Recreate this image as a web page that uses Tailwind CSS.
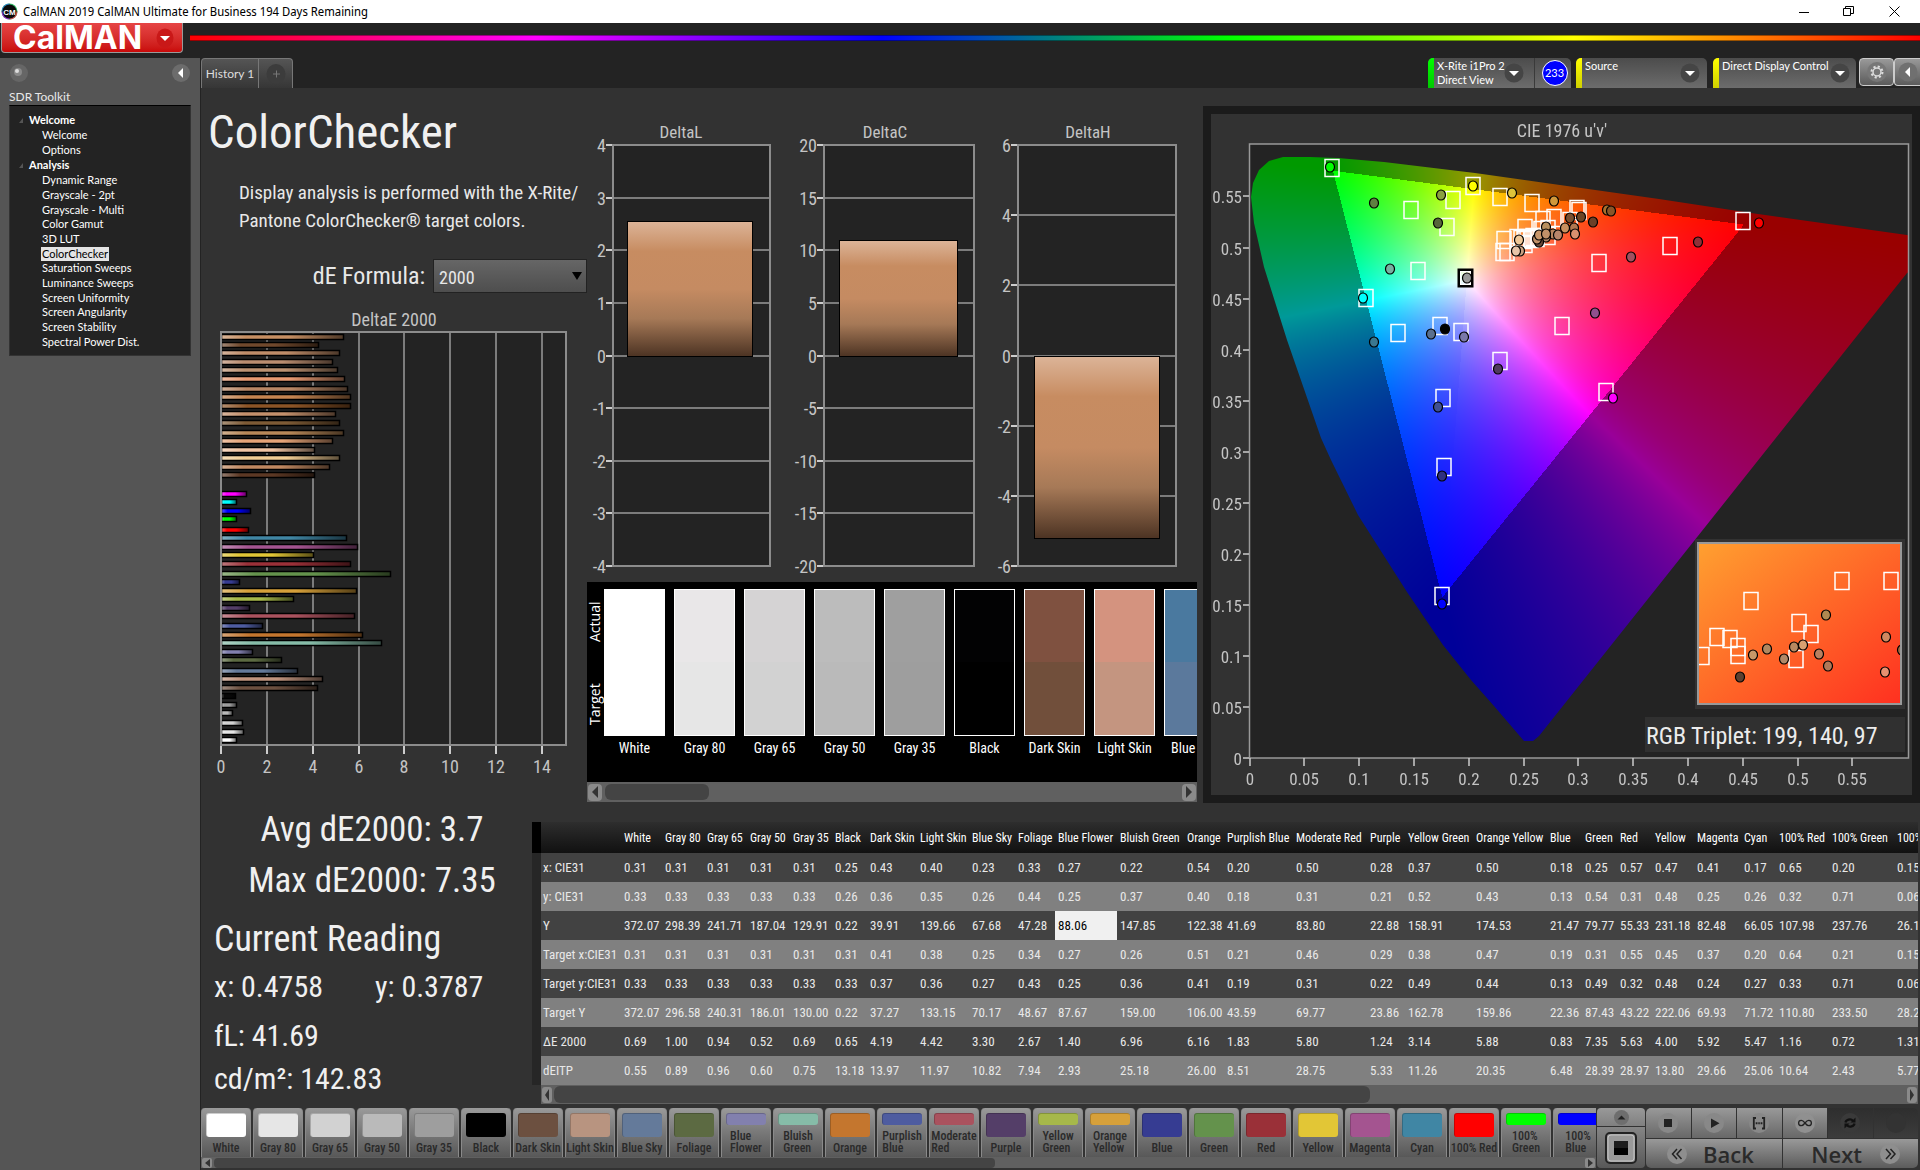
<!DOCTYPE html>
<html lang="en">
<head>
    <meta charset="UTF-8">
    <meta name="viewport" content="width=device-width, initial-scale=1.0">
    <title>CalMAN 2019 CalMAN Ultimate for Business</title>
    <script src="https://cdn.jsdelivr.net/npm/@tailwindcss/browser@4"></script>
</head>
<body class="min-h-screen flex flex-col bg-[#232323] font-['Roboto_Condensed',Roboto,sans-serif] text-[#e8e8e8] overflow-hidden">

    <!-- window title bar -->
    <div class="h-[23px] shrink-0 bg-white text-black flex items-center justify-between pl-px pr-[2px]">
        <div class="flex items-center gap-[5px] font-['Noto_Sans_Display','Noto_Sans',sans-serif] text-[12px]">
            <svg width="17" height="17" viewBox="0 0 17 17" aria-hidden="true">
                <circle cx="8.500" cy="8.500" r="8" fill="#3b6"/>
                <path d="M8.500 .5a8 8 0 0 0-8 8h8z" fill="#38c"/>
                <path d="M.5 8.500a8 8 0 0 0 8 8v-8z" fill="#93c"/>
                <path d="M8.500 16.500a8 8 0 0 0 8-8h-8z" fill="#c55"/>
                <circle cx="8.500" cy="8.500" r="7" fill="#0a0a0a"/>
                <text x="8.500" y="11.500" font-size="8" font-weight="700" text-anchor="middle" fill="#fff" font-family="Liberation Sans">CM</text>
            </svg>
            <span class="whitespace-nowrap">CalMAN 2019 CalMAN Ultimate for Business 194 Days Remaining</span>
        </div>
        <div class="flex items-center">
            <button aria-label="Minimize" class="w-[45px] h-[22px] flex items-center justify-center"><svg width="10" height="10"><path d="M0 5.500h10" stroke="#000"/></svg></button>
            <button aria-label="Restore" class="w-[45px] h-[22px] flex items-center justify-center"><svg width="11" height="11" fill="none" stroke="#000"><path d="M.5 2.500h7v7h-7zM2.500 2.500v-2h8v7h-3"/></svg></button>
            <button aria-label="Close" class="w-[47px] h-[22px] flex items-center justify-center"><svg width="11" height="11" stroke="#000"><path d="M.5.5l10 10M10.500.5l-10 10"/></svg></button>
        </div>
    </div>

    <!-- logo and rainbow line -->
    <header class="h-[35px] shrink-0 flex items-start pl-px">
        <button class="w-[182px] h-[30px] flex items-center justify-between pl-[11px] pr-2 rounded-b-[4px] border border-t-0 border-[#9a9a9a] bg-linear-to-b from-[#e64545] to-[#c90808]">
            <span class="font-['Inter',sans-serif] font-bold text-[32px] leading-[28px] text-white">CalMAN</span>
            <svg width="18" height="20" viewBox="0 0 18 20" aria-hidden="true"><ellipse cx="9" cy="10" rx="8.500" ry="9.500" fill="#c91818"/><path d="M4 8h10l-5 5z" fill="#fff"/></svg>
        </button>
        <div class="flex-1 ml-[7px] mt-[12px] h-[6px] border-y border-black/40 bg-[linear-gradient(90deg,#f00,#f0f_20%,#00f_40%,#0f0_60%,#ff0_80%,#f00)]"></div>
    </header>

    <div class="flex-1 flex min-h-0">
        <!-- workflow tree -->
        <aside class="w-[200px] shrink-0 bg-[#555] px-[9px] font-['Lato',sans-serif] text-[11px]">
            <div class="h-[30px] flex items-center justify-between">
                <svg width="20" height="20" aria-hidden="true"><circle cx="10" cy="10" r="9" fill="#666"/><circle cx="9" cy="9" r="4" fill="#8a8a8a"/><circle cx="8" cy="8" r="2" fill="#ddd"/></svg>
                <button aria-label="Collapse"><svg width="20" height="20"><circle cx="10" cy="10" r="9" fill="#6c6c6c"/><path d="M12 5v10l-5-5z" fill="#fff"/></svg></button>
            </div>
            <div class="h-[17px] text-[12px] leading-[17px]">SDR Toolkit</div>
            <nav class="h-[251px] border border-[#333] border-t-black bg-[#232323] pt-[6px] text-white">
                <div class="h-[16px] leading-[14px] font-bold flex items-center gap-[6px] pl-[9px]"><svg width="4" height="5"><path d="M4 0v5H0z" fill="#555"/></svg>Welcome</div>
                <ul id="tree-welcome" class="h-[29px] flex flex-col pl-[31px]"></ul>
                <div class="h-[16px] leading-[14px] font-bold flex items-center gap-[6px] pl-[9px]"><svg width="4" height="5"><path d="M4 0v5H0z" fill="#555"/></svg>Analysis</div>
                <ul id="tree-analysis" class="h-[176px] flex flex-col pl-[31px]"></ul>
            </nav>
        </aside>

        <main class="flex-1 min-w-0 flex flex-col pl-px">
            <!-- tabs and device selectors -->
            <div class="h-[30px] shrink-0 flex items-stretch justify-between font-['Lato',sans-serif] text-[12px] text-white">
                <div class="flex">
                    <button class="w-[58px] rounded-tl-[4px] border border-b-0 border-[#777] bg-linear-to-b from-[#555] to-[#363636] text-[#ddd] whitespace-nowrap">History 1</button>
                    <button aria-label="Add" class="w-[34px] rounded-tr-[4px] border border-l-0 border-b-0 border-[#777] bg-linear-to-b from-[#555] to-[#363636] flex items-center justify-center"><svg width="20" height="22"><ellipse cx="10" cy="11" rx="9.500" ry="10" fill="#3c3c3c"/><path d="M7 11h7M10.500 7.500v7" stroke="#777"/></svg></button>
                </div>
                <div class="flex items-stretch text-[11px]">
                    <div class="w-[143px] flex rounded-t-[5px] overflow-hidden bg-linear-to-b from-[#4c4c4c] to-[#6c6c6c] mr-[5px]">
                        <div class="w-[6px] shrink-0 bg-linear-to-b from-[#00ff00] to-[#00c800]"></div>
                        <div class="flex-1 min-w-0 pl-[3px] pt-px leading-[14px] whitespace-nowrap">X-Rite i1Pro 2<br>Direct View</div>
                        <button aria-label="Meter menu" class="w-[31px] flex items-center border-r border-[#3a3a3a]"><svg width="20" height="20"><circle cx="10" cy="10" r="9.500" fill="#454545"/><path d="M5 8h10l-5 5z" fill="#fff"/></svg></button>
                        <div class="w-[36px] flex items-center justify-center pl-[3px]"><span class="w-[26px] h-[26px] rounded-full border border-white bg-[#0000ff] leading-[24px] text-center">233</span></div>
                    </div>
                    <div class="w-[131px] flex rounded-t-[5px] overflow-hidden bg-linear-to-b from-[#4c4c4c] to-[#6c6c6c] mr-[6px]">
                        <div class="w-[6px] shrink-0 bg-linear-to-b from-[#ffff00] to-[#d0d000]"></div>
                        <div class="flex-1 min-w-0 pl-[3px] pt-px leading-[14px]">Source</div>
                        <button aria-label="Source menu" class="w-[27px] flex items-center"><svg width="20" height="20"><circle cx="10" cy="10" r="9.500" fill="#454545"/><path d="M5 8h10l-5 5z" fill="#fff"/></svg></button>
                    </div>
                    <div class="w-[143px] flex rounded-t-[5px] overflow-hidden bg-linear-to-b from-[#4c4c4c] to-[#6c6c6c] mr-[3px]">
                        <div class="w-[6px] shrink-0 bg-linear-to-b from-[#ffff00] to-[#d0d000]"></div>
                        <div class="flex-1 min-w-0 pl-[3px] pt-px leading-[14px] whitespace-nowrap">Direct Display Control</div>
                        <button aria-label="Display menu" class="w-[26px] flex items-center"><svg width="20" height="20"><circle cx="10" cy="10" r="9.500" fill="#454545"/><path d="M5 8h10l-5 5z" fill="#fff"/></svg></button>
                    </div>
                    <button aria-label="Settings" class="w-[35px] h-[28px] rounded-[4px] border border-[#ccc] bg-linear-to-b from-[#999] to-[#5c5c5c] flex items-center justify-center">
                        <svg width="22" height="22" viewBox="0 0 22 22" fill="none"><circle cx="11" cy="11" r="10" fill="#777"/><circle cx="11" cy="11" r="4" stroke="#ddd" stroke-width="1.500"/><circle cx="11" cy="11" r="5.500" stroke="#ddd" stroke-width="2" stroke-dasharray="2.160 2.160"/></svg>
                    </button>
                    <button aria-label="Hide" class="w-[26px] h-[28px] rounded-l-[4px] border border-r-0 border-[#ccc] bg-linear-to-b from-[#999] to-[#5c5c5c] flex items-center justify-center"><svg width="20" height="20"><circle cx="10" cy="10" r="9.500" fill="#707070"/><path d="M12 5v10l-5-5z" fill="#fff"/></svg></button>
                </div>
            </div>

            <div class="flex-1 min-h-0 bg-[#323232]">
                <div class="flex">
                    <!-- left column -->
                    <section class="w-[386px] shrink-0">
                        <h1 class="pl-[7px] pt-[17px] text-[47px] leading-[54px] text-[#f0f0f0]">ColorChecker</h1>
                        <p class="mt-[20px] pl-[38px] text-[19px] leading-[28px] whitespace-nowrap">Display analysis is performed with the X-Rite/<br>Pantone ColorChecker® target colors.</p>
                        <div class="mt-[24px] flex items-center justify-end gap-[8px]">
                            <label for="formula" class="text-[24px] leading-[32px]">dE Formula:</label>
                            <div class="relative">
                                <select id="formula" class="block appearance-none w-[154px] h-[34px] pl-[5px] pt-[3px] text-[18px] border border-[#222] bg-linear-to-b from-[#666] to-[#4e4e4e] text-[#e8e8e8]"><option>2000</option></select>
                                <svg class="absolute right-[5px] top-[13px] pointer-events-none" width="10" height="8"><path d="M0 0h10L5 8z" fill="#000"/></svg>
                            </div>
                        </div>
                        <svg id="delta-e" class="w-full mt-[7px] block" viewBox="0 0 386 490"></svg>
                    </section>

                    <!-- middle column -->
                    <section class="w-[610px] shrink-0 pt-[22px]">
                        <svg id="delta-lch" class="w-full block" viewBox="0 0 610 472"></svg>
                        <div class="bg-black h-[200px] flex overflow-hidden">
                            <div class="w-[17px] shrink-0 flex flex-col font-['Open_Sans',sans-serif] text-[14px] leading-[16px] text-white">
                                <span class="[writing-mode:vertical-rl] rotate-180 h-[80px] text-center">Actual</span>
                                <span class="[writing-mode:vertical-rl] rotate-180 h-[84px] text-center">Target</span>
                            </div>
                            <div id="compare" class="flex gap-[9px] pt-[7px]"></div>
                        </div>
                        <div class="h-[20px] bg-[#606060] flex items-center gap-[3px] px-px">
                            <button aria-label="Scroll left" class="w-[14px] h-[17px] rounded-[4px] bg-[#8a8a8a] flex items-center justify-center"><svg width="6" height="12"><path d="M6 0v12L0 6z" fill="#333"/></svg></button>
                            <div class="w-[104px] h-[16px] rounded-[6px] bg-[#444]"></div>
                            <button aria-label="Scroll right" class="w-[14px] h-[17px] ml-auto rounded-[4px] bg-[#8a8a8a] flex items-center justify-center"><svg width="6" height="12"><path d="M0 0v12l6-6z" fill="#333"/></svg></button>
                        </div>
                    </section>

                    <!-- chromaticity diagram -->
                    <section class="flex-1 min-w-0 pt-[18px] pl-[6px]">
                        <div class="bg-[#1b1b1b] p-[8px]">
                            <div class="relative bg-[#323232] aspect-[701/681]">
                                <canvas id="locus" width="701" height="681" class="absolute inset-0 w-full h-full"></canvas>
                                <svg id="cie" class="absolute inset-0 w-full h-full" viewBox="0 0 701 681"></svg>
                            </div>
                        </div>
                    </section>
                </div>

                <div class="flex">
                    <!-- readouts -->
                    <section class="w-[331px] shrink-0 pt-px text-[#f0f0f0] whitespace-nowrap">
                        <div class="text-[35px] leading-[51px] text-center pl-[11px]">Avg dE2000: 3.7</div>
                        <div class="text-[35px] leading-[51px] text-center pl-[11px]">Max dE2000: 7.35</div>
                        <div class="mt-[8px] pl-[13px] text-[36px] leading-[50px]">Current Reading</div>
                        <div class="pl-[13px] text-[30px] leading-[46px] grid grid-cols-[161px_1fr]"><span>x: 0.4758</span><span>y: 0.3787</span></div>
                        <div class="pl-[13px] text-[30px] leading-[52px]">fL: 41.69</div>
                        <div class="pl-[13px] text-[30px] leading-[34px]">cd/m²: 142.83</div>
                    </section>

                    <!-- results -->
                    <section class="flex-1 min-w-0 mt-[19px] mr-[2px] pl-[9px] bg-[linear-gradient(180deg,#000_31px,#262626_31px,#262626_263px,#323232_263px)] overflow-hidden">
                        <div class="overflow-hidden">
                            <table class="table-fixed w-[1436px] text-[13px] whitespace-nowrap text-left">
                                <colgroup id="cols"></colgroup>
                                <thead class="bg-linear-to-b from-[#2e2e2e] to-[#111]"><tr id="head" class="h-[31px]"></tr></thead>
                                <tbody id="rows"></tbody>
                            </table>
                        </div>
                        <div class="h-[19px] bg-[#606060] flex items-center gap-[2px] px-px">
                            <button aria-label="Scroll left" class="w-[10px] h-[16px] rounded-[3px] bg-[#8a8a8a] flex items-center justify-center"><svg width="4" height="12"><path d="M4 0v12L0 6z" fill="#333"/></svg></button>
                            <div class="w-[816px] h-[17px] rounded-[6px] bg-[#444]"></div>
                            <button aria-label="Scroll right" class="w-[10px] h-[16px] ml-auto rounded-[3px] bg-[#8a8a8a] flex items-center justify-center"><svg width="4" height="12"><path d="M0 0v12l4-6z" fill="#333"/></svg></button>
                        </div>
                    </section>
                </div>
            </div>

            <!-- patch strip and transport -->
            <footer class="h-[63px] shrink-0 bg-[#323232] flex pt-px pb-[2px] text-[#2a2a2a]">
                <div class="flex-1 min-w-0 flex flex-col">
                    <div id="patches" class="flex gap-[2px] overflow-hidden h-[49px]"></div>
                    <div class="h-[11px] bg-[#606060] flex items-center gap-[2px] px-px">
                        <button aria-label="Scroll left" class="w-[10px] h-[10px] rounded-[2px] bg-[#8a8a8a] flex items-center justify-center"><svg width="5" height="8"><path d="M5 0v8L0 4z" fill="#333"/></svg></button>
                        <div class="w-[781px] h-[10px] rounded-[4px] bg-[#444]"></div>
                        <button aria-label="Scroll right" class="w-[10px] h-[10px] ml-auto rounded-[2px] bg-[#8a8a8a] flex items-center justify-center"><svg width="5" height="8"><path d="M0 0v8l5-4z" fill="#333"/></svg></button>
                    </div>
                </div>
                <div class="w-[48px] ml-px mr-px flex flex-col gap-px shrink-0">
                    <button aria-label="Expand" class="h-[18px] rounded-t-[4px] bg-linear-to-b from-[#999] to-[#808080] flex items-center justify-center"><svg width="15" height="15"><circle cx="7.500" cy="7.500" r="7.500" fill="#6e6e6e"/><path d="M3.500 9.500l4-4 4 4z" fill="#222"/></svg></button>
                    <button aria-label="Pattern" class="flex-1 rounded-b-[4px] bg-linear-to-b from-[#858585] to-[#585858] flex items-center justify-center"><svg width="32" height="32"><rect x="1" y="1" width="30" height="30" rx="4" fill="#999" stroke="#222" stroke-width="2"/><rect x="3" y="3" width="26" height="26" rx="3" fill="none" stroke="#c4c4c4"/><path d="M9 9h14v7H9z" fill="#1c1c1c"/><path d="M9 16h14v7H9z" fill="#000"/></svg></button>
                </div>
                <div class="w-[274px] shrink-0 grid grid-cols-6 grid-rows-[30px_29px] gap-px pr-[2px] font-['Open_Sans',sans-serif]">
                    <button aria-label="Stop" class="rounded-tl-[5px] bg-linear-to-b from-[#999] to-[#686868] flex items-center justify-center"><svg width="20" height="20"><circle cx="10" cy="10" r="10" fill="#888"/><path d="M6 6h8v8H6z" fill="#222"/></svg></button>
                    <button aria-label="Play" class="bg-linear-to-b from-[#999] to-[#686868] flex items-center justify-center"><svg width="20" height="20"><circle cx="10" cy="10" r="10" fill="#888"/><path d="M7 5.500v9.500l8.500-4.700z" fill="#222"/></svg></button>
                    <button aria-label="Read series" class="bg-linear-to-b from-[#999] to-[#686868] flex items-center justify-center"><svg width="20" height="20"><circle cx="10" cy="10" r="10" fill="#888"/><path d="M7 5H4.800v10.500H7M13 5h2.200v10.500H13" fill="none" stroke="#222" stroke-width="1.800"/><path d="M6.700 10.300h1.800m.8 0h1.500m.8 0h1.800" stroke="#222" stroke-width="2"/></svg></button>
                    <button aria-label="Read continuous" class="bg-linear-to-b from-[#999] to-[#686868] flex items-center justify-center"><svg width="20" height="20"><circle cx="10" cy="10" r="10" fill="#909090"/><path d="M10 10c-1.500-2-2.500-2.700-3.700-2.700a2.700 2.700 0 0 0 0 5.400c1.200 0 2.200-.7 3.700-2.700s2.500-2.700 3.700-2.700a2.700 2.700 0 0 1 0 5.400c-1.200 0-2.200-.7-3.700-2.700z" fill="none" stroke="#222" stroke-width="1.300"/></svg></button>
                    <button aria-label="Refresh" class="bg-linear-to-b from-[#2e2e2e] to-[#3c3c3c] flex items-center justify-center"><svg width="20" height="20"><circle cx="10" cy="10" r="10" fill="#3a3a3a"/><path d="M5.500 9.500c.3-2.500 5-4.500 7.500-1.800M14.500 10.500c-.3 2.500-5 4.500-7.500 1.800" fill="none" stroke="#111" stroke-width="2.200"/><path d="M15.500 4.500v5h-5zM4.500 15.500v-5h5z" fill="#111"/></svg></button>
                    <button aria-label="Unused" class="rounded-tr-[5px] bg-linear-to-b from-[#2e2e2e] to-[#3c3c3c] flex items-center justify-center"><svg width="20" height="20"><circle cx="10" cy="10" r="10" fill="#333"/></svg></button>
                    <button class="col-span-3 rounded-bl-[5px] bg-linear-to-b from-[#999] to-[#5c5c5c] flex items-center pl-[21px] gap-[16px] text-[22px] leading-[28px] font-semibold"><svg width="20" height="20"><circle cx="10" cy="10" r="10" fill="#8e8e8e"/><path d="M10 5l-4.500 5 4.500 5M14.500 5L10 10l4.500 5" fill="none" stroke="#222" stroke-width="1.500"/></svg>Back</button>
                    <button class="col-span-3 rounded-br-[5px] bg-linear-to-b from-[#999] to-[#5c5c5c] flex items-center justify-end pr-[18px] gap-[18px] text-[22px] leading-[28px] font-semibold">Next<svg width="20" height="20"><circle cx="10" cy="10" r="10" fill="#8e8e8e"/><path d="M6 5l4.500 5L6 15M10.500 5l4.500 5-4.500 5" fill="none" stroke="#222" stroke-width="1.500"/></svg></button>
                </div>
            </footer>
        </main>
    </div>

    <script>
        const $ = id => document.getElementById(id);

        // workflow tree
        const tree = {
            'tree-welcome': ['Welcome', 'Options'],
            'tree-analysis': ['Dynamic Range', 'Grayscale - 2pt', 'Grayscale - Multi', 'Color Gamut', '3D LUT', 'ColorChecker', 'Saturation Sweeps', 'Luminance Sweeps', 'Screen Uniformity', 'Screen Angularity', 'Screen Stability', 'Spectral Power Dist.']
        };
        for (const id in tree) {
            $(id).innerHTML = tree[id].map(t => `<li class="flex-1 min-h-0 flex items-center"><a href="#" class="leading-[14px] px-px ${t === 'ColorChecker' ? 'bg-[#e4e4e4] text-black' : ''}">${t}</a></li>`).join('');
        }

        // DeltaE 2000 bars: [y, value, color]
        const bars = [
            [110, 5.32, '#c68f63'], [135, 4.23, '#70482c'], [160, 5.15, '#bf8c68'], [185, 4.84, '#ba8d70'], [211, 5.06, '#bc9272'], [237, 5.36, '#e89a72'],
            [267, 5.49, '#b98765'], [292, 5.63, '#c58450'], [317, 5.63, '#8c5426'], [343, 4.97, '#c4906c'], [369, 5.15, '#7d5a35'], [399, 5.32, '#b88858'],
            [424, 4.84, '#e6a478'], [450, 4.06, '#f0c4a4'], [475, 5.15, '#f0cc94'], [501, 4.71, '#c08860'], [526, 4.06, '#5c3824'],
            [583, 1.09, '#ff00ff'], [607, 0.65, '#00ffff'], [634, 1.28, '#0000ff'], [658, 0.65, '#00ff00'], [690, 1.16, '#ff0000'],
            [715, 5.47, '#4086a4'], [741, 5.92, '#a45490'], [766, 4.00, '#e2c636'], [792, 5.63, '#9a3038'], [822, 7.35, '#64924c'], [847, 0.80, '#363c92'],
            [873, 5.88, '#d6a03a'], [898, 3.14, '#a6b84a'], [924, 1.24, '#543e68'], [949, 5.80, '#aa525e'], [979, 1.80, '#4e5ca0'], [1006, 6.16, '#c4762e'],
            [1030, 6.96, '#86bca8'], [1057, 1.35, '#8280ae'], [1081, 2.62, '#5c6a42'], [1112, 3.30, '#647a9a'], [1138, 4.42, '#c0947e'], [1163, 4.19, '#6c5040'],
            [1189, 0.62, '#080808'], [1215, 0.65, '#9e9e9e'], [1240, 0.50, '#b8b8b8'], [1270, 0.92, '#d2d2d2'], [1296, 0.98, '#e6e6e6'], [1321, 0.65, '#ffffff']
        ];
        let e = `<defs>
            <linearGradient id="shade-x"><stop offset="0" stop-color="#fff" stop-opacity=".35"/><stop offset=".2" stop-color="#fff" stop-opacity="0"/><stop offset=".55" stop-color="#000" stop-opacity="0"/><stop offset="1" stop-color="#000" stop-opacity=".6"/></linearGradient></defs>
            <rect x="20" y="32" width="345" height="413" fill="#232323"/>`;
        for (let v = 0; v <= 14; v += 2) {
            const x = Math.round(20 + v * 22.93);
            if (v) e += `<path d="M${x} 33V446" stroke="#7c7c7c" stroke-width="2"/>`;
            e += `<path d="M${x} 446v8" stroke="#ccc" stroke-width="2"/><text x="${x}" y="473" font-size="18" fill="#c4c4c4" text-anchor="middle">${v}</text>`;
        }
        bars.forEach(([y, v, c]) => {
            const box = `x="20.5" y="${Math.round(y / 3) - 2.5}" width="${Math.round(v * 22.93)}" height="5"`;
            e += `<rect ${box} fill="${c}"/><rect ${box} fill="url(#shade-x)" stroke="#000" stroke-width="1.5"/>`;
        });
        e += `<rect x="20" y="32" width="345" height="413" fill="none" stroke="#8c8c8c" stroke-width="2"/>
            <text x="193" y="26" font-size="18" fill="#c4c4c4" text-anchor="middle">DeltaE 2000</text>`;
        $('delta-e').innerHTML = e;

        // DeltaL, DeltaC, DeltaH
        const deltas = [
            { name: 'DeltaL', mid: 94, x: 26, w: 157, max: 4, step: 1, value: 2.58, bx: 40, bw: 125 },
            { name: 'DeltaC', mid: 298, x: 237, w: 150, max: 20, step: 5, value: 11, bx: 252, bw: 118 },
            { name: 'DeltaH', mid: 501, x: 431, w: 158, max: 6, step: 2, value: -5.2, bx: 447, bw: 125 }
        ];
        let d = `<defs><linearGradient id="skin" x2="0" y2="1"><stop offset="0" stop-color="#dcb498"/><stop offset=".22" stop-color="#c78c61"/><stop offset=".5" stop-color="#c58b62"/><stop offset=".72" stop-color="#a67957"/><stop offset="1" stop-color="#4c3323"/></linearGradient></defs>`;
        deltas.forEach(c => {
            d += `<rect x="${c.x}" y="35" width="${c.w}" height="421" fill="#232323"/><text x="${c.mid}" y="28" font-size="17" fill="#c4c4c4" text-anchor="middle">${c.name}</text>`;
            for (let v = -c.max; v <= c.max; v += c.step) {
                const y = Math.round(245.6 - v / c.max * 210.4);
                d += `<path d="M${c.x} ${y}h${c.w}" stroke="#7c7c7c" stroke-width="2"/><path d="M${c.x - 7} ${y}h7" stroke="#ccc" stroke-width="2"/>
                    <text x="${c.x - 7}" y="${y + 7}" font-size="18" fill="#c4c4c4" text-anchor="end">${v}</text>`;
            }
            const h = Math.round(Math.abs(c.value) / c.max * 210);
            d += `<rect x="${c.x}" y="35" width="${c.w}" height="421" fill="none" stroke="#8c8c8c" stroke-width="2"/>
                <rect x="${c.bx + 0.5}" y="${c.value > 0 ? 246.5 - h : 246.5}" width="${c.bw}" height="${h}" fill="url(#skin)" stroke="#000"/>`;
        });
        $('delta-lch').innerHTML = d;

        // actual / target comparison
        const compare = [['White', '#ffffff', '#ffffff'], ['Gray 80', '#e9e7e8', '#e6e6e6'], ['Gray 65', '#d5d3d4', '#d2d2d2'], ['Gray 50', '#bcbcbc', '#bababa'], ['Gray 35', '#9f9f9f', '#9e9e9e'],
            ['Black', '#020203', '#000000'], ['Dark Skin', '#7f5140', '#714f3b'], ['Light Skin', '#d4937f', '#c49580'], ['Blue Sky', '#4a799f', '#5b799c']];
        $('compare').innerHTML = compare.map(([n, a, t]) => `<div class="w-[61px] shrink-0 text-center text-[14px] leading-[25px] text-white whitespace-nowrap">
            <div class="h-[147px] border border-white" style="background:linear-gradient(${a} 50%,${t} 50%)"></div>${n}</div>`).join('');

        // chromaticity diagram
        const OX = 1211, OY = 114;
        const px = u => 1249.5 - OX + u * 1096, py = v => 758 - OY - v * 1021;
        const uv2xyz = (u, v) => { const s = 6 * u - 16 * v + 12; const x = 9 * u / s, y = 4 * v / s; return [x, y, 1 - x - y]; };
        const inv = m => {
            const [a, b, c, d, e, f, g, h, i] = m, D = a * (e * i - f * h) - b * (d * i - f * g) + c * (d * h - e * g);
            return [e * i - f * h, c * h - b * i, b * f - c * e, f * g - d * i, a * i - c * g, c * d - a * f, d * h - e * g, b * g - a * h, a * e - b * d].map(n => n / D);
        };
        const mul = (m, v) => [0, 3, 6].map(r => m[r] * v[0] + m[r + 1] * v[1] + m[r + 2] * v[2]);
        const P = [0.64, 0.21, 0.15, 0.33, 0.71, 0.06, 0.03, 0.08, 0.79];
        const S = mul(inv(P), [0.3127 / 0.329, 1, 0.3583 / 0.329]);
        const M = inv(P.map((n, k) => n * S[k % 3]));
        const cv = document.createElement('canvas');
        cv.width = 701; cv.height = 681;
        const cx = cv.getContext('2d'), img = cx.createImageData(701, 681);
        for (let y = 0; y < 681; y++) for (let x = 0; x < 701; x++) {
            const u = (x - px(0)) / 1096, v = Math.max(0.001, (py(0) - y) / 1021);
            const raw = mul(M, uv2xyz(u, v)), inside = Math.min(...raw) >= 0;
            const rgb = raw.map(n => Math.max(0, n));
            // weaken blue along the purple side
            if (rgb[1] <= rgb[0] && rgb[1] <= rgb[2]) rgb[2] -= 0.24 * (rgb[2] - rgb[1]) * Math.min(1, rgb[0] / rgb[2]);
            const top = Math.max(...rgb), k = (y * 701 + x) * 4;
            rgb.forEach((n, j) => img.data[k + j] = 255 * (inside ? 1 : 0.6) * n / top);
            img.data[k + 3] = 255;
        }
        cx.putImageData(img, 0, 0);
        const g = $('locus').getContext('2d');
        g.fillStyle = '#232323';
        g.fillRect(38, 30, 660, 614);
        g.beginPath(); g.rect(39, 30, 658, 614); g.clip();
        g.translate(-OX, -OY);
        const edge = [[1251, 197], [1253, 183], [1259, 170], [1269, 161], [1283, 157], [1310, 157], [1338, 158], [1384, 162], [1475, 173], [1567, 186], [1659, 199], [1751, 213], [1907, 235], [1960, 243], [1907, 273], [1539, 736], [1533, 741], [1524, 741], [1518, 734], [1494, 706], [1471, 680], [1443, 645], [1407, 592], [1358, 515], [1331, 460], [1321, 438], [1287, 340], [1264, 267], [1254, 223]];
        g.beginPath();
        edge.forEach((p, i) => i ? g.lineTo(...p) : g.moveTo(...p));
        g.closePath(); g.clip();
        g.drawImage(cv, OX, OY);

        let c = `<defs>
            <linearGradient id="in-a" x2="1" y2="1"><stop offset="0" stop-color="#ffa030"/><stop offset=".5" stop-color="#ff6828"/><stop offset="1" stop-color="#ff3020"/></linearGradient>
            <clipPath id="in-clip"><rect x="487" y="429" width="203" height="161"/></clipPath></defs>
            <rect x="38.500" y="30" width="659" height="614" fill="none" stroke="#999" stroke-width="1.500"/>
            <text x="351" y="23" font-size="18" fill="#c4c4c4" text-anchor="middle">CIE 1976 u'v'</text>`;
        for (let i = 0; i <= 11; i++) {
            const t = String(i * 5 / 100), x = Math.round(px(i * 0.05)), y = Math.round(py(i * 0.05));
            c += `<path d="M${x} 644v8M32 ${y}h6" stroke="#ccc" stroke-width="1.500"/>
                <text x="${x}" y="671" font-size="17" fill="#c4c4c4" text-anchor="middle">${t}</text>
                <text x="31" y="${y + 7}" font-size="17" fill="#c4c4c4" text-anchor="end">${t}</text>`;
        }
        const box = (x, y, s = '#fff') => `<rect x="${Math.round(x - OX) - 7}" y="${Math.round(y - OY) - 8.5}" width="14" height="17" fill="none" stroke="${s}" stroke-width="1.5"/>`;
        const dot = (x, y, f) => `<ellipse cx="${Math.round(x - OX)}" cy="${Math.round(y - OY)}" rx="4.5" ry="5" fill="${f}" stroke="#000" stroke-width="1.2"/>`;
        const targets = [[1332, 168], [1473, 186], [1453, 200], [1411, 210], [1447, 227], [1500, 197], [1532, 203], [1577, 209], [1579, 211], [1570, 221], [1554, 218], [1543, 220], [1525, 228], [1743, 221], [1670, 246], [1599, 263], [1418, 271], [1366, 298], [1440, 326], [1461, 332], [1398, 333], [1562, 326], [1500, 361], [1606, 392], [1443, 398], [1444, 467], [1442, 596],
            [1504, 240], [1503, 252], [1507, 252], [1517, 238], [1521, 239], [1524, 240], [1527, 238], [1531, 239], [1533, 237], [1537, 238], [1541, 230], [1548, 229], [1548, 236], [1525, 244]];
        targets.forEach(p => c += box(...p));
        c += `<rect x="248" y="156" width="13" height="16" fill="none" stroke="#000" stroke-width="3"/><rect x="249.500" y="157.500" width="10" height="13" fill="none" stroke="#fff"/>`;
        const measured = [[1330, 167, '#00ff00'], [1441, 195, '#8aa040'], [1374, 203, '#5f8040'], [1438, 223, '#56663a'], [1390, 269, '#78b0a0'], [1363, 298, '#00ffff'], [1374, 342, '#3a7890'], [1431, 334, '#5a7090'], [1445, 329, '#000'], [1464, 337, '#7a78a8'], [1498, 369, '#503a60'], [1595, 313, '#90508f'], [1613, 398, '#ff00ff'], [1438, 407, '#405090'], [1698, 242, '#903038'], [1759, 223, '#ff0000'], [1467, 278, '#999'], [1442, 476, '#303080'], [1442, 604, '#0000ff'],
            [1473, 186, '#ffff00'], [1512, 193, '#e0c43a'], [1554, 201, '#d0983a'], [1607, 210, '#a8702c'], [1611, 211, '#8a5528'], [1581, 217, '#6b4526'], [1570, 218, '#7a5030'], [1593, 222, '#6b4028'], [1574, 228, '#b07850'], [1565, 228, '#c8905f'], [1575, 234, '#d89070'], [1546, 227, '#b8905f'], [1553, 234, '#b8855f'], [1558, 235, '#b8856a'], [1546, 237, '#b08868'], [1539, 242, '#6b4a38'], [1537, 239, '#c09068'], [1539, 235, '#c8966a'], [1546, 234, '#c09068'], [1519, 240, '#f0c898'], [1520, 251, '#c8a080'], [1516, 251, '#e8c4a8'], [1631, 257, '#a05060']];
        measured.forEach(p => c += dot(...p));

        // magnifier around the selected point
        c += `<rect x="484" y="425" width="210" height="170" fill="#323232"/><rect x="487" y="429" width="203" height="161" fill="url(#in-a)"/><g clip-path="url(#in-clip)">`;
        [[1842, 581], [1891, 581], [1751, 601], [1799, 623], [1811, 634], [1717, 637], [1730, 639], [1738, 647], [1738, 655], [1796, 659], [1702, 656], [1691, 641]].forEach(p => c += box(...p));
        [[1826, 615, '#b08850'], [1886, 637, '#d08860'], [1902, 650, '#a06840'], [1767, 649, '#b08860'], [1753, 655, '#c89868'], [1794, 647, '#b88860'], [1803, 645, '#d8a070'], [1784, 659, '#b08868'], [1819, 654, '#b88060'], [1828, 666, '#b07858'], [1885, 672, '#e89070'], [1740, 677, '#5a4030']].forEach(p => c += dot(...p));
        c += `</g><rect x="487" y="429" width="203" height="161" fill="none" stroke="#999" stroke-width="2"/>
            <rect x="434" y="603" width="260" height="35" fill="#303030"/><text x="435" y="630" font-size="24" fill="#ececec">RGB Triplet: 199, 140, 97</text>`;
        $('cie').innerHTML = c;

        // results table
        const widths = [80, 41, 42, 43, 43, 42, 35, 50, 52, 46, 40, 62, 67, 40, 69, 74, 38, 68, 74, 35, 35, 35, 42, 47, 35, 53, 65, 83];
        const names = ['', 'White', 'Gray 80', 'Gray 65', 'Gray 50', 'Gray 35', 'Black', 'Dark Skin', 'Light Skin', 'Blue Sky', 'Foliage', 'Blue Flower', 'Bluish Green', 'Orange', 'Purplish Blue', 'Moderate Red', 'Purple', 'Yellow Green', 'Orange Yellow', 'Blue', 'Green', 'Red', 'Yellow', 'Magenta', 'Cyan', '100% Red', '100% Green', '100% Blue'];
        const rows = [
            'x: CIE31|0.31 0.31 0.31 0.31 0.31 0.25 0.43 0.40 0.23 0.33 0.27 0.22 0.54 0.20 0.50 0.28 0.37 0.50 0.18 0.25 0.57 0.47 0.41 0.17 0.65 0.20 0.15',
            'y: CIE31|0.33 0.33 0.33 0.33 0.33 0.26 0.36 0.35 0.26 0.44 0.25 0.37 0.40 0.18 0.31 0.21 0.52 0.43 0.13 0.54 0.31 0.48 0.25 0.26 0.32 0.71 0.06',
            'Y|372.07 298.39 241.71 187.04 129.91 0.22 39.91 139.66 67.68 47.28 88.06 147.85 122.38 41.69 83.80 22.88 158.91 174.53 21.47 79.77 55.33 231.18 82.48 66.05 107.98 237.76 26.1',
            'Target x:CIE31|0.31 0.31 0.31 0.31 0.31 0.31 0.41 0.38 0.25 0.34 0.27 0.26 0.51 0.21 0.46 0.29 0.38 0.47 0.19 0.31 0.55 0.45 0.37 0.20 0.64 0.21 0.15',
            'Target y:CIE31|0.33 0.33 0.33 0.33 0.33 0.33 0.37 0.36 0.27 0.43 0.25 0.36 0.41 0.19 0.31 0.22 0.49 0.44 0.13 0.49 0.32 0.48 0.24 0.27 0.33 0.71 0.06',
            'Target Y|372.07 296.58 240.31 186.01 130.00 0.22 37.27 133.15 70.17 48.67 87.67 159.00 106.00 43.59 69.77 23.86 162.78 159.86 22.36 87.43 43.22 222.06 69.93 71.72 110.80 233.50 28.2',
            'ΔE 2000|0.69 1.00 0.94 0.52 0.69 0.65 4.19 4.42 3.30 2.67 1.40 6.96 6.16 1.83 5.80 1.24 3.14 5.88 0.83 7.35 5.63 4.00 5.92 5.47 1.16 0.72 1.31',
            'dEITP|0.55 0.89 0.96 0.60 0.75 13.18 13.97 11.97 10.82 7.94 2.93 25.18 26.00 8.51 28.75 5.33 11.26 20.35 6.48 28.39 28.97 13.80 29.66 25.06 10.64 2.43 5.77'
        ];
        $('cols').innerHTML = widths.map(w => `<col style="width:${w}px">`).join('');
        $('head').innerHTML = names.map(n => `<th class="p-0 pl-[3px] text-[12px] font-normal text-white">${n}</th>`).join('');
        $('rows').innerHTML = rows.map((r, i) => {
            const [label, list] = r.split('|');
            return `<tr class="h-[29px] ${i % 2 ? 'bg-[#808080]' : 'bg-[#424242]'}"><th class="p-0 pl-[2px] font-normal">${label}</th>` +
                list.split(' ').map(v => `<td class="p-0 pl-[3px] ${v === '88.06' ? 'bg-[#f0f0f0] text-black' : ''}">${v}</td>`).join('') + '</tr>';
        }).join('');

        // patch buttons
        const patches = [['White', '#ffffff'], ['Gray 80', '#e6e6e6'], ['Gray 65', '#d2d2d2'], ['Gray 50', '#bababa'], ['Gray 35', '#9e9e9e'], ['Black', '#000000'], ['Dark Skin', '#6c5040'], ['Light Skin', '#b89480'], ['Blue Sky', '#647a9a'], ['Foliage', '#5c6a42'],
            ['Blue<br>Flower', '#8280ae'], ['Bluish<br>Green', '#86bca8'], ['Orange', '#c4762e'], ['Purplish<br>Blue', '#4e5ca0'], ['Moderate<br>Red', '#aa525e'], ['Purple', '#543e68'], ['Yellow<br>Green', '#a6b84a'], ['Orange<br>Yellow', '#d6a03a'], ['Blue', '#363c92'], ['Green', '#64924c'],
            ['Red', '#9a3038'], ['Yellow', '#e2c636'], ['Magenta', '#a45490'], ['Cyan', '#4086a4'], ['100% Red', '#ff0000'], ['100%<br>Green', '#00ff00'], ['100%<br>Blue', '#0000ff']];
        $('patches').innerHTML = patches.map(([n, col]) => `<button class="w-[50px] h-[49px] shrink-0 rounded-t-[4px] border-x border-[#8a8a8a] bg-linear-to-b from-[#9a9a9a] to-[#585858] flex flex-col items-center pt-[5px] pb-[3px] text-[12px] leading-[12px] font-medium whitespace-nowrap">
            <span class="w-[40px] flex-1 rounded-[3px] border-t border-l border-black/20" style="background:${col}"></span><span class="pt-[5px] text-left">${n}</span></button>`).join('');
    </script>
</body>
</html>
